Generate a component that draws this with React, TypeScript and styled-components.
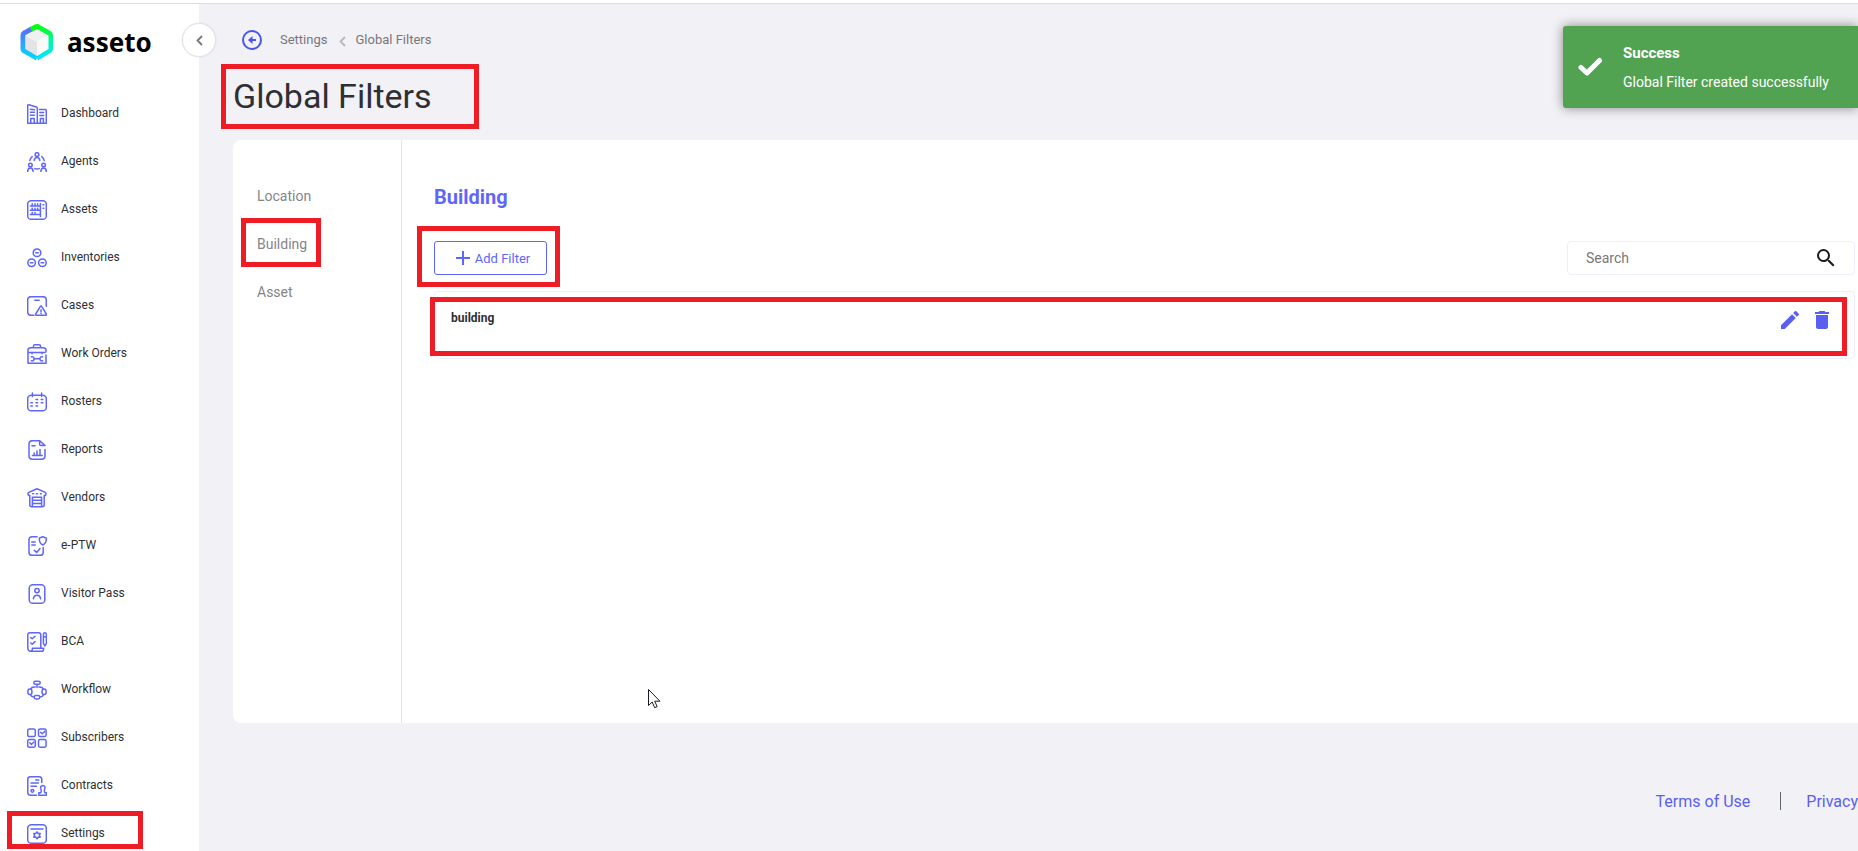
import React from "react";
import styled, { createGlobalStyle, css } from "styled-components";
import { MdDelete, MdEdit, MdSearch } from "react-icons/md";

const colors = {
  accent: "#5f66fb",
  link: "#5b5fef",
  page: "#f2f1f6",
  line: "#e2e2e6",
  field: "#efeefc",
  success: "#51a351",
  mark: "#ee1c25",
};

const GlobalStyle = createGlobalStyle`
  *, *::before, *::after { box-sizing: border-box; }
  body {
    margin: 0;
    overflow: hidden;
    background: ${colors.page};
    font-family: Roboto, "Liberation Sans", sans-serif;
    color: #2f2f33;
  }
  button, input { font: inherit; }
  ul { list-style: none; margin: 0; padding: 0; }
  h1, h2, p { margin: 0; }
  a { text-decoration: none; }
`;

/* Red outline drawn over an element; offsets are top, right, bottom, left. */
const marked = (inset: string) => css`
  position: relative;
  &::after {
    content: "";
    position: absolute;
    inset: ${inset};
    border: 5px solid ${colors.mark};
    pointer-events: none;
  }
`;

const Shell = styled.div`
  display: flex;
  height: 100vh;
  overflow: hidden;
  border-top: 1px solid #dededf;
  box-shadow: 0 -3px 0 #fff;
  margin-top: 3px;
`;

const Sidebar = styled.aside`
  position: relative;
  flex: 0 0 199px;
  background: #fff;
`;

const Brand = styled.a`
  display: flex;
  align-items: center;
  gap: 13px;
  height: 76px;
  margin-bottom: 10px;
  padding: 0 0 0 20px;
  color: #000;
`;

const BrandName = styled.span`
  font: 700 26px/32px "Noto Sans", sans-serif;
`;

const CollapseButton = styled.button`
  position: absolute;
  top: 19px;
  right: -17px;
  display: grid;
  place-items: center;
  width: 34px;
  height: 34px;
  padding: 0;
  border: 1px solid #e3e3e8;
  border-radius: 50%;
  background: #fff;
  box-shadow: 0 0 2px rgba(0, 0, 0, 0.12);
  color: #77777b;
`;

const NavLink = styled.a`
  display: flex;
  align-items: center;
  gap: 14px;
  height: 48px;
  padding-left: 27px;
  color: #2f2f33;
  font-size: 12px;
  line-height: 16px;
  span { padding-bottom: 2px; }
`;

const NavItem = styled.li<{ $marked?: boolean }>`
  ${(p) => p.$marked && marked("1px 56px 9px 7px")}
`;

const Main = styled.main`
  flex: 1;
  min-width: 0;
  padding-left: 34px;
`;

const Breadcrumb = styled.nav`
  display: flex;
  align-items: center;
  height: 20px;
  margin: 26px 0 0 9px;
  font-size: 13px;
  line-height: 20px;
  a { color: #77777b; }
`;

const BackButton = styled.button`
  display: flex;
  margin-right: 18px;
  padding: 0;
  border: 0;
  background: none;
`;

const CrumbArrow = styled.svg`
  margin: 2px 9px 0 12px;
`;

const Title = styled.h1`
  width: 246px;
  height: 65px;
  margin: 14px 0 11px;
  font-weight: 400;
  font-size: 34px;
  line-height: 64px;
  ${marked("0 0 0 -12px")}
`;

const Card = styled.section`
  display: flex;
  min-height: 583px;
  border-radius: 8px 0 0 8px;
  background: #fff;
`;

const Tabs = styled.ul`
  flex: 0 0 169px;
  padding: 32px 0 0 24px;
  border-right: 1px solid ${colors.line};
`;

const Tab = styled.li<{ $marked?: boolean }>`
  height: 48px;
  a {
    display: inline-block;
    color: #858588;
    font-size: 14px;
    line-height: 48px;
    ${(p) => p.$marked && marked("-2px -14px 1px -16px")}
  }
`;

const Content = styled.div`
  position: relative;
  flex: 1;
  min-width: 0;
  padding: 45px 3px 0 32px;
`;

const Heading = styled.h2`
  margin-bottom: 32px;
  color: ${colors.accent};
  font-weight: 700;
  font-size: 20px;
  line-height: 24px;
`;

const Toolbar = styled.div`
  display: flex;
  justify-content: space-between;
  margin-bottom: 16px;
`;

const AddButton = styled.button`
  display: flex;
  align-items: center;
  justify-content: center;
  gap: 5px;
  width: 113px;
  height: 34px;
  padding: 0 0 0 5px;
  border: 1px solid ${colors.accent};
  border-radius: 3px;
  background: #fff;
  color: ${colors.accent};
  font-size: 13px;
  ${marked("-16px -14px -13px -18px")}
`;

const SearchBox = styled.label`
  display: flex;
  align-items: center;
  width: 288px;
  height: 34px;
  padding: 0 16px 0 18px;
  border: 1px solid ${colors.field};
  border-radius: 4px;
  color: #1c1c1e;
`;

const SearchInput = styled.input`
  flex: 1;
  min-width: 0;
  padding: 0;
  border: 0;
  outline: 0;
  background: none;
  font-size: 14px;
  line-height: 20px;
  &::placeholder { color: #77777b; opacity: 1; }
`;

const FilterRow = styled.li`
  display: flex;
  align-items: flex-start;
  height: 68px;
  padding: 16px 20px 0 16px;
  border: 1px solid ${colors.field};
  border-radius: 4px;
  font-weight: 700;
  font-size: 12px;
  line-height: 20px;
  ${marked("5px 7px 2px -5px")}
`;

const RowActions = styled.div`
  display: flex;
  gap: 8px;
  margin-left: auto;
`;

const IconButton = styled.button`
  display: flex;
  padding: 0;
  border: 0;
  background: none;
  color: ${colors.link};
`;

const Pointer = styled.svg`
  position: absolute;
  top: 549px;
  left: 246px;
`;

const Footer = styled.footer`
  display: flex;
  justify-content: flex-end;
  align-items: center;
  height: 24px;
  margin-top: 67px;
  font-size: 16px;
  line-height: 24px;
  a { color: ${colors.link}; white-space: nowrap; }
`;

const FooterRule = styled.span`
  width: 1px;
  height: 18px;
  margin: 0 25px 2px 30px;
  background: #5d666f;
`;

const Toast = styled.div`
  position: absolute;
  top: 26px;
  right: 0;
  display: flex;
  align-items: center;
  gap: 20px;
  width: 295px;
  height: 82px;
  padding-left: 15px;
  border-radius: 3px 0 0 3px;
  background: ${colors.success};
  box-shadow: 0 0 12px rgba(0, 0, 0, 0.45);
  color: #fff;
  font-size: 14px;
  line-height: 20px;
  strong {
    display: block;
    margin-bottom: 9px;
    font-size: 15px;
  }
`;

const icons: Record<string, React.ReactNode> = {
  Dashboard: (
    <>
      <path d="M.7 19.3V1.6Q.7.6 1.8.8L9.4 3q.9.3.9 1.2v15.1zM12.4 5.4h5.7q1.2 0 1.2 1.2v12.7H10.3" />
      <path d="M3.4 5.2l4 .6M3.4 8.2h4M3.400 11.2h4M12.8 8.6h3.8M12.8 11.6h3.8M3.8 19v-4.4h3.4V19M13.4 19v-4.4h3V19" />
    </>
  ),
  Agents: (
    <>
      <circle cx="10" cy="2.6" r="1.9" />
      <circle cx="3.4" cy="13" r="1.8" />
      <circle cx="16.6" cy="13" r="1.8" />
      <path d="M7.2 8.4c.3-3.8 5.3-3.8 5.6 0M.7 19.4c.2-4.4 5.2-4.4 5.4 0M13.9 19.4c.2-4.4 5.2-4.4 5.4 0M2.8 8.6q.6-2.6 2.4-4M17.2 8.6q-.6-2.6-2.4-4M7.8 16.6q2.2.6 4.4 0" />
    </>
  ),
  Assets: (
    <>
      <rect x=".7" y=".7" width="18.6" height="18.6" rx="3.4" />
      <path d="M3.4 6h9.8M3.4 10.2h9.8M3.4 14.6h9.8M13.4 3.4v13.2M5.2 3.8V6M8 3.8V6M10.6 3.8V6M5.2 8.2v2M8 8.2v2M10.6 8.2v2M5.2 12.6v2M8 12.6v2M16 4.8h.8M16 8.2h.8" />
    </>
  ),
  Inventories: (
    <>
      <circle cx="10" cy="4.8" r="3.8" />
      <circle cx="4.6" cy="14.8" r="3.8" />
      <circle cx="15.4" cy="14.8" r="3.8" />
      <path d="M8.7 4.8h2.6M3.3 14.8h2.6M14.1 14.8h2.6" />
    </>
  ),
  Cases: (
    <>
      <path d="M6.8 19.3H4.2Q.7 19.3.7 15.8V4.2Q.7.7 4.2.7h11.6q3.5 0 3.5 3.5v6M7.8 4.2h4.4" />
      <path d="M13.2 10.6q.8-1.2 1.6 0l4.5 7.4q.5 1.3-.8 1.3h-9q-1.3 0-.8-1.3zM14 13.8v2M14 17.2v.2" />
    </>
  ),
  "Work Orders": (
    <>
      <path d="M6.4 3.6V2.4Q6.4.8 8 .8h4q1.6 0 1.6 1.6v1.2M2.6 8.4Q.7 8.4.9 6.4q.2-2.6 3-2.6h12.2q2.8 0 3 2.6.2 2-1.7 2zM1 8v11.2h18V11" />
      <path d="M5 8.6v1.2M15 8.6v1.2M7 14.8h6M4.4 12.8q2.6-.6 2.6 2t-2.6 2M15.6 12.8q-2.6-.6-2.6 2t2.6 2" />
    </>
  ),
  Rosters: (
    <>
      <rect x=".7" y="3.2" width="18.6" height="15.6" rx="3.6" />
      <path d="M5.4 1v3.4M14.6 1v3.4" />
      <path d="M9 7.6h1.6M14.2 7.6h1.6M3.8 10.8h1.6M9 10.8h1.6M14.2 10.8h1.6M3.8 14h1.6M9 14h1.6" />
    </>
  ),
  Reports: (
    <>
      <path d="M18 9.4v6.4q0 3.5-3.5 3.5h-9Q2 19.3 2 15.8V4.2Q2 .7 5.5.7h7.3L18 5.6H14q-1.4 0-1.4-1.4V.9" />
      <path d="M5 5.8h3M5.4 15.4h9.8M7.2 15V13M10 15v-4M13 15V9.4" />
    </>
  ),
  Vendors: (
    <>
      <path d="M2.6 7.4H1.6Q.2 5.2 1.8 4.4L10 .8l8.2 3.6q1.6.8.2 3h-1M2.8 7.4v9.4q0 2 2 2h10.4q2 0 2-2V7.4" />
      <path d="M5.6 5.8h1M9.4 5.8h1.2M13.4 5.8h1M5.4 18.4V9.2h9.2v9.2M5.6 12.2h8.8M5.6 15.4h8.8" />
    </>
  ),
  "e-PTW": (
    <>
      <path d="M10 .8H5Q2 .8 2 3.8v12.4q0 3.1 3 3.1h8.2q3 0 3-3.1v-4.8" />
      <path d="M4.8 6h3.4M4.8 9h3.4M7.4 14.4l2.2 2 3.4-3.8M15.8.8l3.4 1.2q.6 5-3.4 7-4-2-3.4-7z" />
    </>
  ),
  "Visitor Pass": (
    <>
      <rect x="2.2" y=".7" width="15.6" height="18.6" rx="3.6" />
      <circle cx="10" cy="6.6" r="2.2" />
      <path d="M6.4 14.8q.4-3.6 3.6-3.6t3.6 3.6" />
    </>
  ),
  BCA: (
    <>
      <path d="M13.8 16V3q0-2.2-2.2-2.2H3Q.8.8.8 3v12.8q0 3.4 3 3.4h11.6q1.4-.4 1.2-3H5.4q0 3-1.8 3" />
      <path d="M3.8 5.6l1.4 1.2L8 4.2M3.8 11l1.4 1.2L8 9.6M16.4 3Q16.4.8 17.9.8T19.4 3v8.4l-1.5 2.6-1.5-2.6zM16.4 4.8h3" />
    </>
  ),
  Workflow: (
    <>
      <rect x="6.8" y="1.2" width="6.4" height="3" rx="1.5" />
      <rect x=".9" y="9" width="4" height="5.6" rx="2" />
      <rect x="15.1" y="9" width="4" height="5.6" rx="2" />
      <rect x="7.2" y="15.6" width="5.6" height="3.4" rx="1.7" />
      <path d="M10 4.4v3M8.2 7q-3.2-.4-4.6 1.8M11.800 7q3.2-.4 4.6 1.8M3.4 14.8q1 2.2 3.6 2.2M16.6 14.8q-1 2.2-3.6 2.2" />
    </>
  ),
  Subscribers: (
    <>
      <rect x=".7" y="1" width="7.6" height="7.6" rx="1.6" />
      <rect x="11.5" y="1" width="7.6" height="7.6" rx="1.6" />
      <rect x=".7" y="11.6" width="7.6" height="7.6" rx="1.6" />
      <rect x="11.5" y="11.6" width="7.6" height="7.6" rx="1.6" />
      <path d="M13.6 4.2l1.6 1.6 2.6-2.4M2.8 14.8l1.6 1.6L7 14" />
    </>
  ),
  Contracts: (
    <>
      <path d="M9.6 19.2H3.4Q.8 19.2.8 16.6V3.4Q.8.8 3.4.8h8.8q2.6 0 2.6 2.6v3" />
      <path d="M8.8 4h3M4 7h7.4M4 10.2h5.4M11.8 19.2v-2.4h1.8q1.2-1.8.2-4-.8-3 2-3.2 2.8.2 2 3.2-1 2.2.2 4h1.4v2.4z" />
      <circle cx="5.4" cy="14.8" r="1.4" />
    </>
  ),
  Settings: (
    <>
      <rect x=".7" y=".7" width="18.6" height="18.6" rx="3.6" />
      <path d="M4 5h12M10 7.9l1.2 1.6 2-.1-.8 1.9.8 1.9-2-.1L10 14.7l-1.2-1.6-2 .1.8-1.9-.8-1.9 2 .1z" />
    </>
  ),
};

const NavIcon = ({ name }: { name: string }) => (
  <svg width="20" height="20" viewBox="0 0 20 20" fill="none" stroke={colors.accent} strokeWidth="1.5" strokeLinecap="round" strokeLinejoin="round" aria-hidden="true">
    {icons[name]}
  </svg>
);

const Logo = () => (
  <svg width="34" height="38" viewBox="0 0 34 38" fill="none" aria-hidden="true">
    <defs>
      <linearGradient id="edge" x1="0" y1="0" x2="0" y2="1">
        <stop offset="0" stopColor="#04ff12" />
        <stop offset=".5" stopColor="#00f6b0" />
        <stop offset="1" stopColor="#00e5ff" />
      </linearGradient>
      <linearGradient id="side" x1="0" y1="0" x2="0" y2="1">
        <stop offset="0" stopColor="#5c6cff" />
        <stop offset="1" stopColor="#00d8ff" />
      </linearGradient>
    </defs>
    <path d="M17 3.5l11.500 6.300q2 1 2 3v12.400q0 2-2 3L17 35" stroke="url(#edge)" strokeWidth="5" />
    <path d="M17 35L5 28.400q-2-1-2-3V12.600q0-2 2-3l7-3.800" stroke="url(#side)" strokeWidth="5" />
    <path d="M11 6.500L15.500 4q1.500-.8 3 0" stroke="#04ff12" strokeWidth="5" />
    <path d="M17 6l11 6.500-11 6.500-11-6.500z" fill="#f1f1f1" />
    <path d="M5.500 12.500L17 19v14L5.500 26z" fill="#e4e4e4" />
    <path d="M28.500 12.500L17 19v14l11.500-7z" fill="#fafafa" />
  </svg>
);

const Chevron = () => (
  <path d="M6 1L1.500 5.500 6 10" fill="none" stroke="currentColor" strokeWidth="1.800" />
);

export default function App() {
  return (
    <>
      <GlobalStyle />
      <Shell>
        <Sidebar>
          <Brand href="#">
            <Logo />
            <BrandName>asseto</BrandName>
          </Brand>
          <nav aria-label="Main">
            <ul>
              {Object.keys(icons).map((name) => (
                <NavItem key={name} $marked={name === "Settings"}>
                  <NavLink href="#">
                    <NavIcon name={name} />
                    <span>{name}</span>
                  </NavLink>
                </NavItem>
              ))}
            </ul>
          </nav>
          <CollapseButton aria-label="Collapse menu">
            <svg width="7" height="11" viewBox="0 0 7 11"><Chevron /></svg>
          </CollapseButton>
        </Sidebar>
        <Main>
          <Breadcrumb aria-label="Breadcrumb">
            <BackButton aria-label="Back">
              <svg width="20" height="20" viewBox="0 0 20 20" fill="none" stroke="#4956ea" strokeWidth="2">
                <circle cx="10" cy="10" r="9" />
                <path d="M14 10H8" />
                <path d="M10.500 6L6 10l4.500 4z" fill="#4956ea" stroke="none" />
              </svg>
            </BackButton>
            <a href="#">Settings</a>
            <CrumbArrow width="7" height="11" viewBox="0 0 7 11" color="#b8b8bc"><Chevron /></CrumbArrow>
            <a href="#">Global Filters</a>
          </Breadcrumb>
          <Title>Global Filters</Title>
          <Card>
            <Tabs>
              <Tab><a href="#">Location</a></Tab>
              <Tab $marked><a href="#">Building</a></Tab>
              <Tab><a href="#">Asset</a></Tab>
            </Tabs>
            <Content>
              <Heading>Building</Heading>
              <Toolbar>
                <AddButton>
                  <svg width="14" height="14" viewBox="0 0 14 14" stroke="currentColor" strokeWidth="2" aria-hidden="true">
                    <path d="M7 0v14M0 7h14" />
                  </svg>
                  Add Filter
                </AddButton>
                <SearchBox>
                  <SearchInput type="text" placeholder="Search" aria-label="Search" />
                  <MdSearch size={24} />
                </SearchBox>
              </Toolbar>
              <ul>
                <FilterRow>
                  building
                  <RowActions>
                    <IconButton aria-label="Edit"><MdEdit size={24} /></IconButton>
                    <IconButton aria-label="Delete"><MdDelete size={24} /></IconButton>
                  </RowActions>
                </FilterRow>
              </ul>
              <Pointer width="13" height="20" viewBox="0 0 13 20" aria-hidden="true">
                <path d="M.5.5v16l3.700-3.500 2.500 5.700 2.500-1-2.500-5.500h5.200z" fill="#fff" stroke="#1b1b26" />
              </Pointer>
            </Content>
          </Card>
          <Footer>
            <a href="#">Terms of Use</a>
            <FooterRule />
            <a href="#">Privacy</a>
          </Footer>
        </Main>
      </Shell>
      <Toast role="status">
        <svg width="25" height="20" viewBox="0 0 25 20" fill="none" stroke="#fff" strokeWidth="5" strokeLinecap="round" strokeLinejoin="round" aria-hidden="true">
          <path d="M3 10.500l6 5.500L21.500 3.500" />
        </svg>
        <div>
          <strong>Success</strong>
          <p>Global Filter created successfully</p>
        </div>
      </Toast>
    </>
  );
}
